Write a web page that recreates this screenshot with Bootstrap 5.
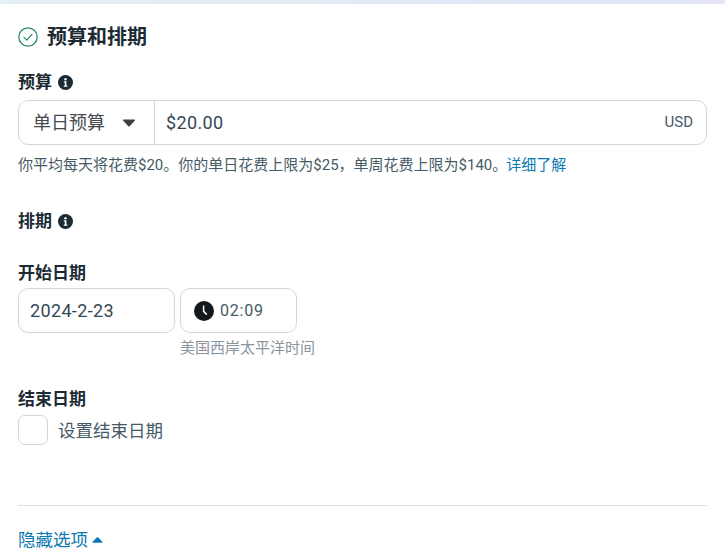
<!DOCTYPE html>
<html lang="zh">
<head>
<meta charset="utf-8">
<title>预算和排期</title>
<link href="https://cdn.jsdelivr.net/npm/bootstrap@5.3.0/dist/css/bootstrap.min.css" rel="stylesheet">
<style>
html,body{height:555px;overflow:hidden;background:#fff}
body{font-family:Roboto,"Noto Sans CJK SC",sans-serif;color:#1c2b33}
.topstrip{height:4px;background:linear-gradient(90deg,#e3f0f5,#e2e8f5 60%,#e4e6f6)}
.pane{padding:0 18px}
.heading-row{height:32px;margin-top:17px;gap:9px}
.heading-txt{font-size:20px;font-weight:700;line-height:32px}
.lbl{font-size:17px;font-weight:700;line-height:22px;gap:6px;color:#1c2b33}
.lbl1{margin-top:18px}
.lbl2{margin-top:35px}
.lbl3{margin-top:30px}
.lbl4{margin-top:31px}
.budget-box{height:45px;margin-top:7px;border:1px solid #d4d7da;border-radius:10px;font-size:18px}
.budget-sel{width:136px;border-right:1px solid #d4d7da;padding:0 18px 0 14px;color:#444950;flex:none}
.budget-val{padding:0 13px 0 11px;color:#344854}
.latin-num{letter-spacing:.35px}
.ccy{font-size:15px;color:#465a66}
.helptext{font-size:15px;line-height:20px;margin-top:10px;color:#465a66;white-space:nowrap}
.helptext a,.fold-link{color:#0a78b2;text-decoration:none}
.helptext a{margin-left:-1px}
.date-row{margin-top:4px;gap:5px}
.date-box{width:157px;height:45px;border:1px solid #d4d7da;border-radius:10px;padding-left:11px;font-size:18px;color:#344854}
.time-col{width:117px}
.time-box{height:45px;border:1px solid #d4d7da;border-radius:10px;padding-left:13px;font-size:16px;color:#465a66;gap:6px;letter-spacing:.8px}
.tz{font-size:15px;line-height:18px;margin-top:6px;color:#8a949c;white-space:nowrap}
.end-row{margin-top:5px;gap:10px;font-size:17.5px;color:#465a66}
.end-txt{padding-top:3px}
.check-box{width:30px;height:30px;border:1px solid #d4d7da;border-radius:7px;flex:none}
.sep{height:1px;background:#dddfe1;margin-top:60px}
.fold-link{font-size:17.5px;line-height:24px;margin-top:22px;gap:4px}
</style>
</head>
<body>
<div class="topstrip"></div>
<div class="pane">
  <div class="heading-row d-flex align-items-center">
    <svg width="20" height="20" viewBox="0 0 20 20" fill="none" stroke="#2d8a6e" stroke-width="1.3"><circle cx="10" cy="10" r="9.2"/><path d="M6 10.4l2.8 2.7L14 7.4" stroke-linecap="round" stroke-linejoin="round"/></svg>
    <span class="heading-txt">预算和排期</span>
  </div>
  <div class="lbl lbl1 d-flex align-items-center"><span>预算</span>
    <svg width="15" height="15" viewBox="0 0 15 15"><circle cx="7.5" cy="7.5" r="7.5" fill="#1c2b33"/><circle cx="7.5" cy="4.2" r="1.2" fill="#fff"/><path d="M5.8 6.3h2.6v4.2h1v1.2H5.8v-1.2h1V7.5h-1z" fill="#fff"/></svg>
  </div>
  <div class="budget-box d-flex">
    <div class="budget-sel d-flex align-items-center justify-content-between"><span>单日预算</span>
      <svg width="14" height="8" viewBox="0 0 13 8"><path d="M1 0.5h11a.6.6 0 0 1 .4 1L7.2 7.2a1 1 0 0 1-1.4 0L.6 1.5a.6.6 0 0 1 .4-1z" fill="#3a4046"/></svg>
    </div>
    <div class="budget-val flex-grow-1 d-flex align-items-center justify-content-between"><span class="latin-num">$20.00</span><span class="ccy">USD</span></div>
  </div>
  <div class="helptext">你平均每天将花费$20。你的单日花费上限为$25，单周花费上限为$140。<a href="#">详细了解</a></div>
  <div class="lbl lbl2 d-flex align-items-center"><span>排期</span>
    <svg width="15" height="15" viewBox="0 0 15 15"><circle cx="7.5" cy="7.5" r="7.5" fill="#1c2b33"/><circle cx="7.5" cy="4.2" r="1.2" fill="#fff"/><path d="M5.8 6.3h2.6v4.2h1v1.2H5.8v-1.2h1V7.5h-1z" fill="#fff"/></svg>
  </div>
  <div class="lbl lbl3">开始日期</div>
  <div class="date-row d-flex align-items-start">
    <div class="date-box d-flex align-items-center"><span class="latin-num">2024-2-23</span></div>
    <div class="time-col">
      <div class="time-box d-flex align-items-center">
        <svg width="20" height="20" viewBox="0 0 20 20"><circle cx="10" cy="10" r="10" fill="#14181c"/><path d="M9.6 4.6v5.8l3.2 3.2" fill="none" stroke="#fff" stroke-width="1.5"/></svg>
        <span>02:09</span>
      </div>
      <div class="tz">美国西岸太平洋时间</div>
    </div>
  </div>
  <div class="lbl lbl4">结束日期</div>
  <div class="end-row d-flex align-items-center"><span class="check-box"></span><span class="end-txt">设置结束日期</span></div>
  <div class="sep"></div>
  <a class="fold-link d-flex align-items-center" href="#">隐藏选项
    <svg width="11" height="6" viewBox="0 0 10 6" preserveAspectRatio="none"><path d="M9 5.8H1a.6.6 0 0 1-.4-1L4.3.5a1 1 0 0 1 1.4 0l3.7 4.3a.6.6 0 0 1-.4 1z" fill="#0a78b2"/></svg>
  </a>
</div>
</body>
</html>
